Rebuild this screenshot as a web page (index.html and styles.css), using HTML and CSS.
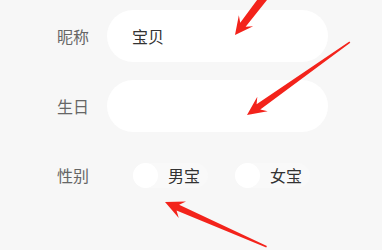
FILE: index.html
```html
<!DOCTYPE html>
<html lang="zh">
<head>
<meta charset="utf-8">
<link rel="stylesheet" href="styles.css">
</head>
<body>
<div class="form">
  <div class="row">
    <span class="label">昵称</span>
    <div class="field">宝贝</div>
  </div>
  <div class="row">
    <span class="label">生日</span>
    <div class="field"></div>
  </div>
  <div class="row row-gender">
    <span class="label">性别</span>
    <div class="options">
      <span class="opt"><span class="radio"></span>男宝</span>
      <span class="opt"><span class="radio"></span>女宝</span>
    </div>
  </div>
</div>
<svg class="arrows" width="382" height="250" viewBox="0 0 382 250">
  <g fill="#f3231b">
    <polygon transform="translate(235,35) rotate(127.6)" points="0,0 -18,-9 -13,-3.4 -60,-4.2 -60,4.2 -13,3.4 -18,9"/>
    <polygon transform="translate(247,115) rotate(144.7)" points="0,0 -19,-9 -14,-3.2 -126,-0.8 -126,0.8 -14,3.2 -19,9"/>
    <polygon transform="translate(165,202) rotate(203.8)" points="0,0 -19,-9 -14,-3.2 -111,-0.8 -111,0.8 -14,3.2 -19,9"/>
  </g>
</svg>
</body>
</html>
```
FILE: styles.css
```css
html, body {
  margin: 0;
  padding: 0;
  background: #f7f7f7;
  width: 382px;
  height: 250px;
  overflow: hidden;
  font-family: "Noto Sans CJK SC", "Noto Sans", sans-serif;
}
.form {
  padding: 10px 0 0 57px;
  display: flex;
  flex-direction: column;
  gap: 18px;
}
.row {
  display: flex;
  align-items: center;
  height: 52px;
}
.row-gender {
  height: 26px;
  margin-top: 12px;
}
.label {
  width: 50px;
  font-size: 16px;
  color: #666;
  line-height: 1;
}
.field {
  box-sizing: border-box;
  width: 221px;
  height: 52px;
  border-radius: 26px;
  background: #fff;
  padding-left: 25px;
  display: flex;
  align-items: center;
  font-size: 16px;
  color: #333;
}
.options {
  display: flex;
  align-items: center;
  gap: 27px;
  padding-left: 26px;
}
.opt {
  display: flex;
  align-items: center;
  gap: 10px;
  font-size: 16px;
  color: #333;
  padding-right: 8px;
  border-radius: 13px;
  background: #f9f9f9;
}
.radio {
  width: 25px;
  height: 25px;
  border-radius: 50%;
  background: #fff;
}
.arrows {
  position: absolute;
  left: 0;
  top: 0;
  pointer-events: none;
}
```
